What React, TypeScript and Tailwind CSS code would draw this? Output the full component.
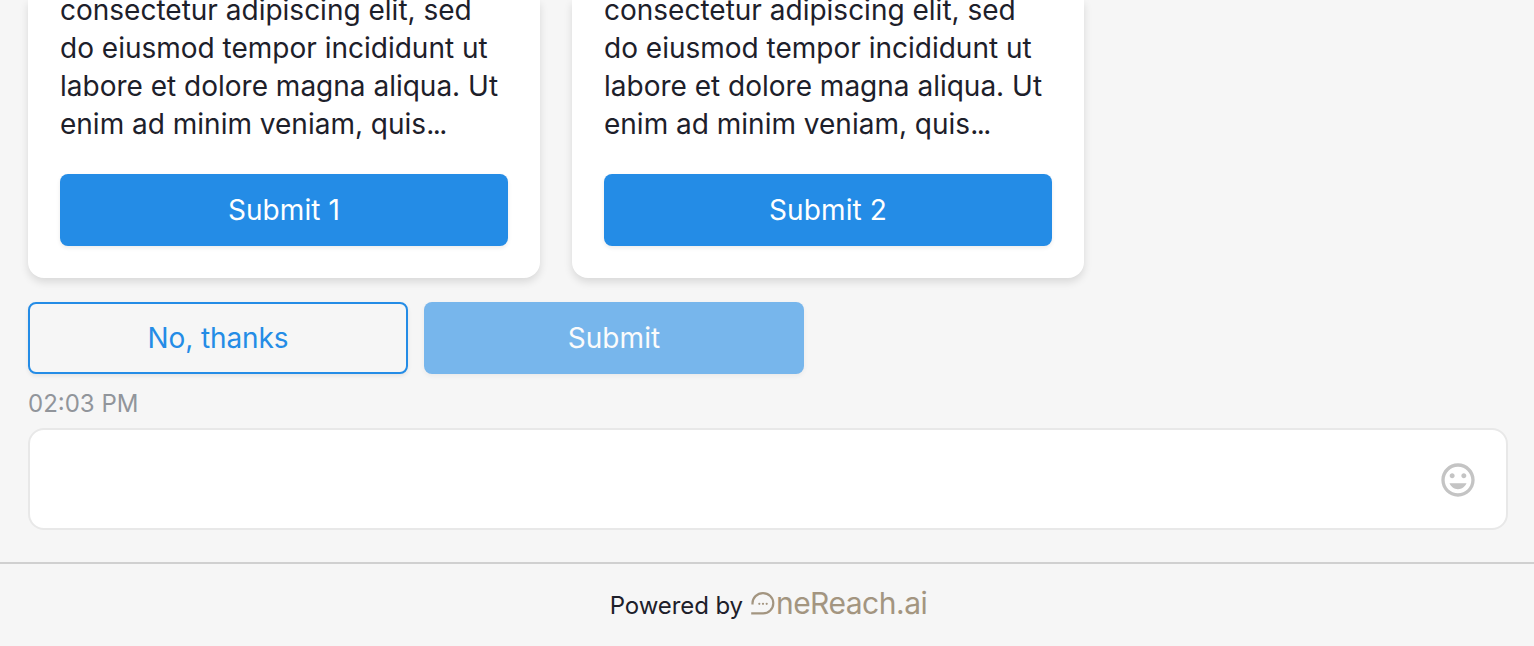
import { MdOutlineMood } from 'react-icons/md'

const cards = [
  { id: 1, action: 'Submit 1' },
  { id: 2, action: 'Submit 2' },
]

const excerpt = ['consectetur adipiscing elit, sed', 'do eiusmod tempor incididunt ut', 'labore et dolore magna aliqua. Ut', 'enim ad minim veniam, quis']

function Card({ action }: { action: string }) {
  return (
    <div className="w-[512px] h-[278px] px-8 pb-8 flex flex-col justify-end bg-white rounded-b-2xl shadow-[0_4px_8px_rgba(0,0,0,0.12)]">
      <p className="text-[28px] leading-[38px] text-[#1d202a] mb-[31px]">
        {excerpt.map((line, i) => (
          <span key={line} className="block whitespace-nowrap">
            {line}
            {i === excerpt.length - 1 && <span className="tracking-[-1.5px]">...</span>}
          </span>
        ))}
      </p>
      <button className="h-[72px] shrink-0 rounded-lg bg-[#248ce6] text-white text-[28px] tracking-[0.1px] shadow-[0_2px_4px_rgba(0,0,0,0.08)]">
        {action}
      </button>
    </div>
  )
}

function Logo() {
  return (
    <span className="mt-px flex items-start text-[#a39580]">
      <svg width="24" height="24" viewBox="0 0 24 24" fill="none" className="mr-px">
        <path
          d="M1.5 13.4V12.4A10.4 10.2 0 0 1 11.9 2.1A10.3 10.2 0 0 1 22.3 12.3A10.2 10.2 0 0 1 12 22.4H0.2"
          stroke="currentColor"
          strokeWidth="2.2"
        />
        <circle cx="8.3" cy="12.8" r="1.1" fill="currentColor" />
        <circle cx="12" cy="12.8" r="1.1" fill="currentColor" />
        <circle cx="15.7" cy="12.8" r="1.1" fill="currentColor" />
      </svg>
      <span className="mt-px text-[30px] leading-[22px] tracking-[-0.5px]">neReach.ai</span>
    </span>
  )
}

export default function App() {
  return (
    <div className="h-[646px] overflow-hidden flex flex-col bg-[#f6f6f6] font-['Inter',sans-serif]">
      <main className="h-[562px] shrink-0 pl-7 pr-[26px]">
        <div className="flex gap-8">
          {cards.map((card) => (
            <Card key={card.id} action={card.action} />
          ))}
        </div>

        <div className="mt-6 flex gap-4 text-[28px]">
          <button className="w-[380px] h-[72px] rounded-lg border-2 border-[#248ce6] bg-[#f6f6f6] text-[#248ce6] tracking-[-0.1px] shadow-[0_2px_4px_rgba(0,0,0,0.08)]">
            No, thanks
          </button>
          <button disabled className="w-[380px] h-[72px] rounded-lg bg-[#248ce6] text-white tracking-[0.1px] opacity-60 shadow-[0_2px_4px_rgba(0,0,0,0.08)]">
            Submit
          </button>
        </div>

        <p className="mt-[14px] h-8 leading-8 text-2xl text-[#91959b]">02:03 PM</p>

        {/* Message input */}
        <div className="mt-2 h-[102px] pr-7 pt-[2px] flex items-center justify-end bg-white border-2 border-[#e8e8e8] rounded-2xl">
          <MdOutlineMood className="size-10 text-[#c4c4c4]" />
        </div>
      </main>

      <footer className="flex-1 flex items-start justify-center border-t-2 border-[#d0d0d0] pt-[26px] pl-[3px]">
        <span className="mr-2 text-2xl leading-8 tracking-[-0.1px] text-[#1d202a]">Powered by</span>
        <Logo />
      </footer>
    </div>
  )
}
